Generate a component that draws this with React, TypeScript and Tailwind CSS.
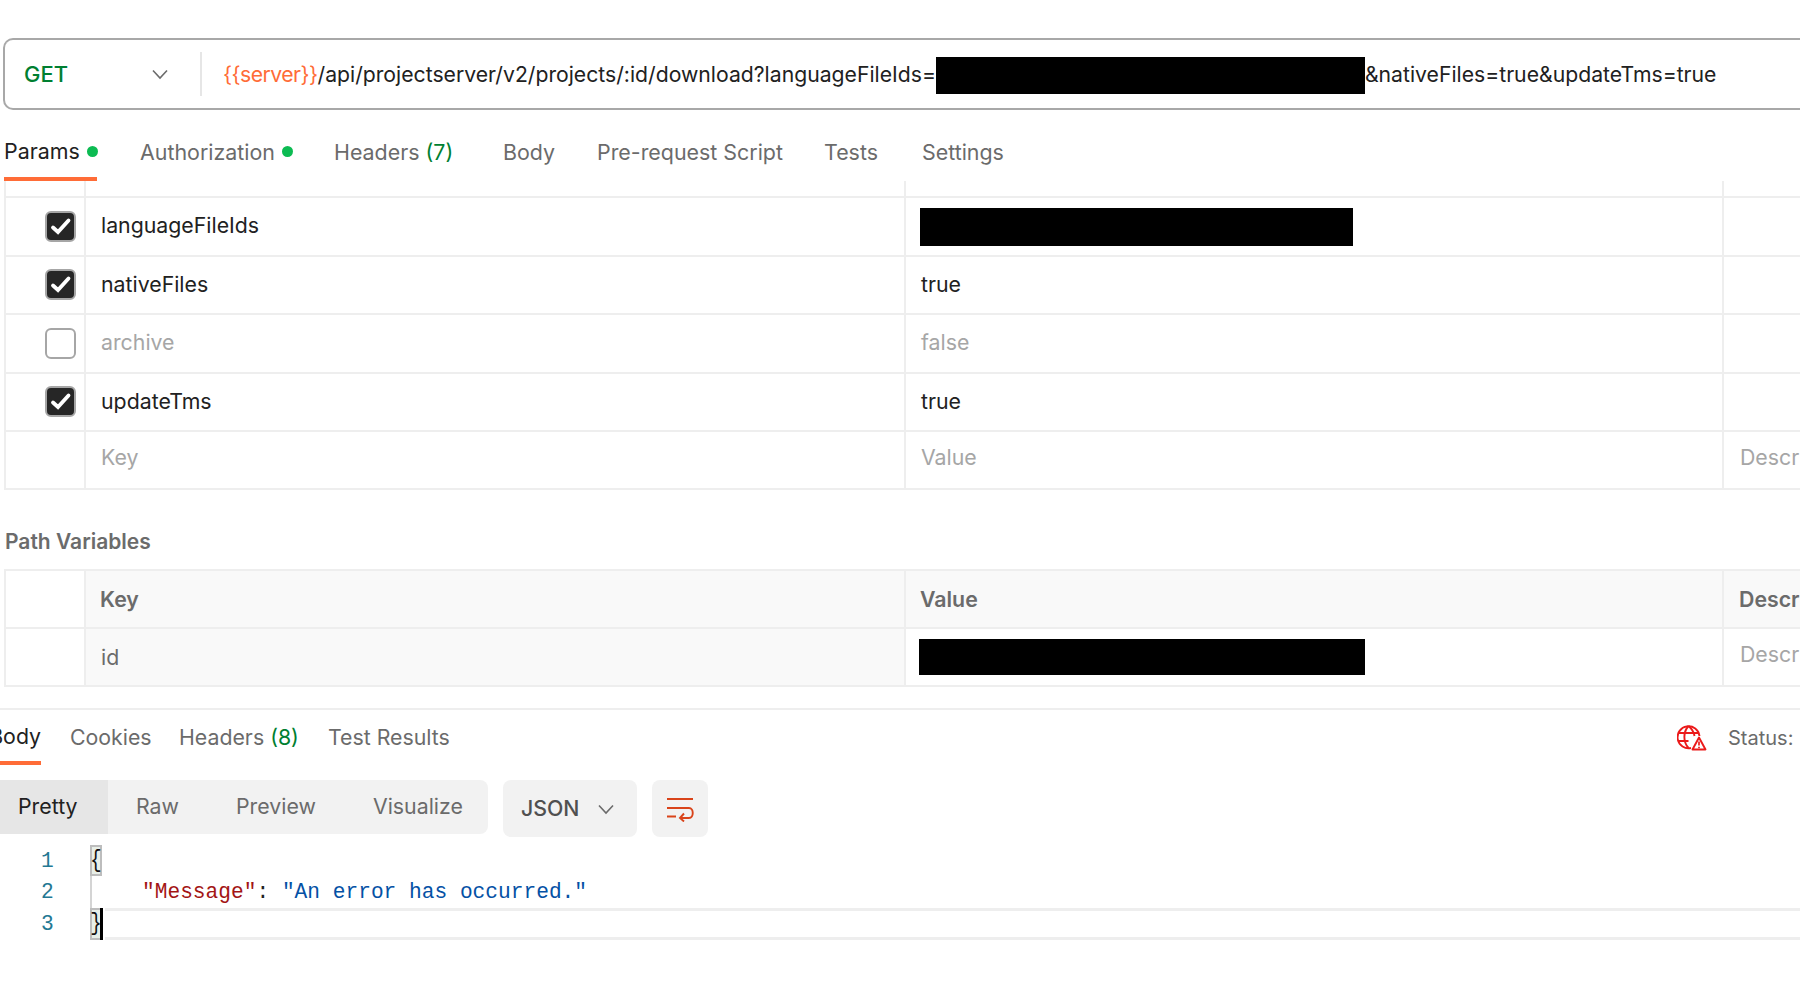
const font = { fontFamily: 'Inter, "Liberation Sans", sans-serif' };

function Chevron({ className }: { className: string }) {
  return (
    <svg className={className} width="18" height="18" viewBox="0 0 18 18" fill="none" stroke="currentColor" strokeWidth="1.6">
      <path d="M2 5.5 9 13l7-7.5" />
    </svg>
  );
}

function Check() {
  return (
    <div className="w-[31px] h-[31px] rounded-md bg-[#262626] border-2 border-[#a6a6a6] flex items-center justify-center">
      <svg width="27" height="27" viewBox="0 0 27 27" fill="none" stroke="#fff" strokeWidth="3.8" strokeLinecap="round">
        <path d="M6 14.5 11 19 21.5 7.5" />
      </svg>
    </div>
  );
}

function Row({ k, v, on, off, black }: { k: string; v?: string; on?: boolean; off?: boolean; black?: boolean }) {
  return (
    <div className="grid grid-cols-[80px_820px_818px_1fr] h-[58.5px] border-b-2 border-[#eeeeee] text-[21.3px]">
      <div className="border-r-2 border-[#eeeeee] flex items-center pl-[39px]">
        {on && <Check />}
        {off && <div className="w-[31px] h-[31px] rounded-md border-2 border-[#a6a6a6] bg-white" />}
      </div>
      <div className={`border-r-2 border-[#eeeeee] flex items-center pl-[15px] ${off ? 'text-[#a6a6a6]' : 'text-[#212121]'}`}>{k}</div>
      <div className={`border-r-2 border-[#eeeeee] flex items-center pl-[15px] ${off ? 'text-[#a6a6a6]' : 'text-[#212121]'}`}>
        {black ? <div className="w-[433px] h-[38px] bg-black -ml-[1px] mt-[1px]" /> : v}
      </div>
      <div />
    </div>
  );
}

function GlobeAlert() {
  return (
    <svg width="30" height="26" viewBox="0 0 30 26" fill="none" stroke="#eb1a1a" strokeWidth="1.9">
      <path d="M14 23A11 11 0 1 1 22.5 11" />
      <path d="M11.5 1C6 7 6 17 11.5 23M11.5 1c3.5 3 5.5 6.5 6 10M1.5 8h20M1.5 16h10" />
      <path d="M22 12.5 28.5 24.5H15.5z" strokeLinejoin="round" fill="#fff" />
      <path d="M22 16.5v4M22 21.8v1.4" strokeWidth="1.7" />
    </svg>
  );
}

function WrapIcon() {
  return (
    <svg width="28" height="26" viewBox="0 0 28 26" fill="none" stroke="#d9441a" strokeWidth="1.9">
      <path d="M1 3h26M1 12h22c5 0 5 10 0 10h-9M18 17.5 14 22l4 3.5M1 20.5h9" />
    </svg>
  );
}

export default function App() {
  return (
    <div className="w-[1800px] h-[991px] overflow-hidden bg-white pt-[38px]" style={font}>
      <div className="ml-[3px] h-[72px] border-2 border-r-0 border-[#a8a8a8] rounded-l-[10px] flex items-center">
        <div className="w-[197px] h-[44px] border-r-2 border-[#e6e6e6] flex items-center pl-[19px] shrink-0">
          <span className="text-[#007f31] text-[22px] font-medium w-[127px]">GET</span>
          <Chevron className="text-[#6b6b6b]" />
        </div>
        <div className="pl-[21px] pt-[1px] text-[21.2px] text-[#212121] flex items-center whitespace-nowrap">
          <span className="text-[#ff6c37] tracking-[-0.53px]">{'{{server}}'}</span>
          <span>/api/projectserver/v2/projects/:id/download?languageFileIds=</span>
          <div className="w-[429px] h-[37px] bg-black mt-[2px]" />
          <span>&amp;nativeFiles=true&amp;updateTms=true</span>
        </div>
      </div>

      <div className="flex items-center h-[71px] pt-[13px] text-[21.4px] text-[#6b6b6b] whitespace-nowrap">
        <div className="ml-[4px] h-full w-[93px] border-b-[4px] border-[#ff6c37] flex items-center text-[#212121] pt-[3px]">
          Params<span className="ml-[7px] w-[11px] h-[11px] shrink-0 rounded-full bg-[#0cbb52]" />
        </div>
        <div className="ml-[43px] flex items-center w-[194px]">
          Authorization<span className="ml-[7px] w-[11px] h-[11px] shrink-0 rounded-full bg-[#0cbb52]" />
        </div>
        <div className="w-[169px]">Headers <span className="text-[#007f31]">(7)</span></div>
        <div className="w-[94px]">Body</div>
        <div className="w-[227px]">Pre-request Script</div>
        <div className="w-[98px]">Tests</div>
        <div>Settings</div>
      </div>

      <div className="ml-[4px] w-[1796px] border-l-2 border-[#eeeeee]">
        <div className="grid grid-cols-[80px_820px_818px_1fr] h-[17px] border-b-2 border-[#eeeeee]">
          <div className="border-r-2 border-[#eeeeee]" />
          <div className="border-r-2 border-[#eeeeee]" />
          <div className="border-r-2 border-[#eeeeee]" />
        </div>
        <Row k="languageFileIds" on black />
        <Row k="nativeFiles" v="true" on />
        <Row k="archive" v="false" off />
        <Row k="updateTms" v="true" on />
        <div className="grid grid-cols-[80px_820px_818px_1fr] h-[58px] border-b-2 border-[#eeeeee] text-[21.3px] text-[#a6a6a6]">
          <div className="border-r-2 border-[#eeeeee]" />
          <div className="border-r-2 border-[#eeeeee] flex items-center pl-[15px] pb-[5px]">Key</div>
          <div className="border-r-2 border-[#eeeeee] flex items-center pl-[15px] pb-[5px]">Value</div>
          <div className="flex items-center pl-[16px] pb-[5px]">Description</div>
        </div>
      </div>

      <div className="ml-[5px] h-[79px] flex items-center pt-[25px] text-[21px] font-semibold text-[#6b6b6b]">Path Variables</div>

      <div className="ml-[4px] w-[1796px] border-l-2 border-t-2 border-[#eeeeee]">
        <div className="grid grid-cols-[80px_820px_818px_1fr] h-[58px] border-b-2 border-[#eeeeee] text-[21.3px] font-semibold text-[#6b6b6b]">
          <div className="border-r-2 border-[#eeeeee]" />
          <div className="border-r-2 border-[#eeeeee] bg-[#f9f9f9] flex items-center pl-[14px] pt-[2px]">Key</div>
          <div className="border-r-2 border-[#eeeeee] bg-[#f9f9f9] flex items-center pl-[14px] pt-[2px]">Value</div>
          <div className="flex items-center pl-[15px] pt-[2px] bg-[#f9f9f9]">Description</div>
        </div>
        <div className="grid grid-cols-[80px_820px_818px_1fr] h-[58px] border-b-2 border-[#eeeeee] text-[21.3px] text-[#6b6b6b]">
          <div className="border-r-2 border-[#eeeeee]" />
          <div className="border-r-2 border-[#eeeeee] bg-[#f9f9f9] flex items-center pl-[15px] pt-[2px]">id</div>
          <div className="border-r-2 border-[#eeeeee] flex items-center pl-[13px]">
            <div className="w-[446px] h-[36px] bg-black" />
          </div>
          <div className="flex items-center pl-[16px] pb-[4px] text-[#a6a6a6]">Description</div>
        </div>
      </div>

      <div className="mt-[21px] border-t-2 border-[#eeeeee] h-[57px] flex items-center text-[21.3px] text-[#6b6b6b] whitespace-nowrap">
        <div className="h-full w-[41px] border-b-[4px] border-[#ff6c37] flex items-center justify-end text-[#212121] overflow-hidden pt-[3px]">
          <span>Body</span>
        </div>
        <div className="ml-[29px] w-[109px]">Cookies</div>
        <div className="w-[149px]">Headers <span className="text-[#007f31]">(8)</span></div>
        <div>Test Results</div>
        <div className="ml-auto flex items-center">
          <GlobeAlert />
          <span className="ml-[21px] mr-[-20px] w-[92px] text-[20px]">Status:</span>
        </div>
      </div>

      <div className="mt-[15px] flex items-start text-[21.3px] text-[#6b6b6b] whitespace-nowrap">
        <div className="w-[488px] h-[54px] bg-[#f2f2f2] rounded-r-lg flex items-center">
          <div className="w-[108px] h-full bg-[#e6e6e6] flex items-center pl-[18px] pb-[1px] text-[#212121]">Pretty</div>
          <div className="ml-[28px] w-[100px] pb-[1px]">Raw</div>
          <div className="w-[137px] pb-[1px]">Preview</div>
          <div className="pb-[1px]">Visualize</div>
        </div>
        <div className="ml-[15px] w-[134px] h-[57px] bg-[#f2f2f2] rounded-lg flex items-center pl-[18px] font-medium text-[#505050]">
          <span className="w-[76px]">JSON</span>
          <Chevron className="text-[#6b6b6b]" />
        </div>
        <div className="ml-[15px] w-[56px] h-[57px] bg-[#f2f2f2] rounded-lg flex items-center justify-center">
          <WrapIcon />
        </div>
      </div>

      <div className="mt-[8px] text-[21.2px] leading-[32px] whitespace-pre" style={{ fontFamily: '"Liberation Mono", monospace' }}>
        <div className="flex h-[31px]">
          <div className="w-[90px] pl-[41px] text-[#237893]">1</div>
          <div className="w-[12px] h-[31px] bg-[#e8efe8] border-2 border-[#bdbdbd] flex items-center justify-center text-[#111] text-[19px]">
            <span className="inline-block scale-y-125">{'{'}</span>
          </div>
        </div>
        <div className="flex h-[32px]">
          <div className="w-[90px] pl-[41px] text-[#237893]">2</div>
          <div className="border-l-2 border-[#d4d4d4] pl-[50px]">
            <span className="text-[#a31515]">"Message"</span>
            <span className="text-[#212121]">: </span>
            <span className="text-[#0451a5]">"An error has occurred."</span>
          </div>
        </div>
        <div className="flex h-[32px]">
          <div className="w-[90px] pl-[41px] text-[#237893]">3</div>
          <div className="flex-1 flex">
            <div className="w-[10px] bg-[#e8efe8] border-2 border-r-0 border-[#bdbdbd] flex items-center justify-center text-[#111] text-[19px]">
              <span className="inline-block scale-y-125">{'}'}</span>
            </div>
            <div className="w-[3px] bg-black" />
            <div className="flex-1 border-y-[3px] border-[#eeeeee] ml-[2px]" />
          </div>
        </div>
      </div>
    </div>
  );
}
